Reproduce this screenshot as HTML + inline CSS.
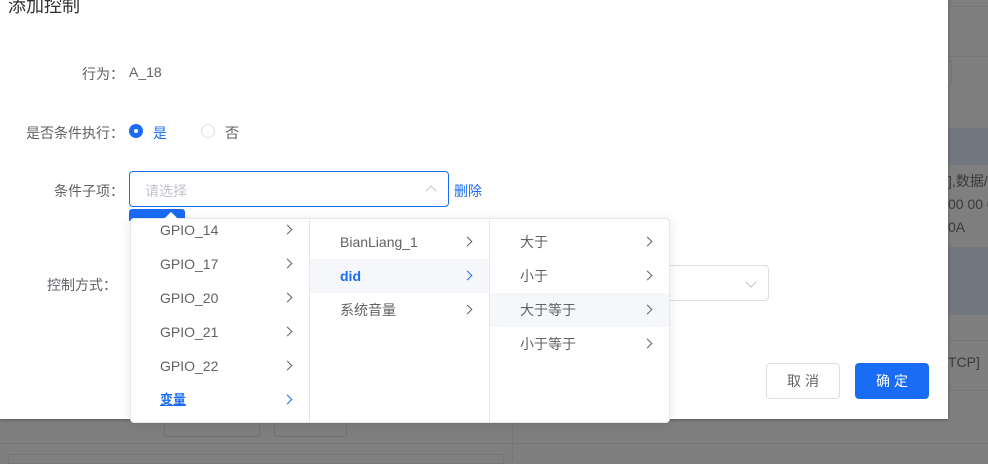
<!DOCTYPE html>
<html><head><meta charset="utf-8"><style>
*{box-sizing:border-box;margin:0;padding:0}
body{width:988px;height:461px;overflow:hidden;background:#7f7f7f;position:relative;font-family:"Liberation Sans","Noto Sans CJK SC",sans-serif;font-size:14px;color:#606266}
.abs{position:absolute}
.modal{left:0;top:-10px;width:948px;height:429px;background:#fff;box-shadow:0 1px 3px rgba(0,0,0,.3)}
.lbl{position:absolute;text-align:right;color:#606266;font-size:14px}
.chev{position:absolute;width:7px;height:7px;border-right:1px solid #606266;border-top:1px solid #606266;transform:rotate(45deg)}
.item{position:absolute;left:0;width:179px;height:34px;line-height:34px;padding-left:30px;font-size:14px;color:#606266}
.item .chev{right:18px;top:13px}
.blue{color:#1a6cf5}
.blue .chev{border-color:#1a6cf5}
.hl{background:#f5f7fa}
</style></head><body>
<div class="abs" style="left:948px;top:6px;width:40px;height:1px;background:#767676"></div>
<div class="abs" style="left:940px;top:24px;color:#555;font-size:12px">z</div>
<div class="abs" style="left:948px;top:56px;width:40px;height:1px;background:#767676"></div>
<div class="abs" style="left:940px;top:60px;width:12px;height:25px;border:1px solid #727272;border-radius:3px"></div>
<div class="abs" style="left:948px;top:128px;width:40px;height:37px;background:#737780"></div>
<div class="abs" style="left:948px;top:171px;color:#3a3a3a;font-size:14px;white-space:nowrap">],数据/</div>
<div class="abs" style="left:948px;top:196px;color:#3a3a3a;font-size:14px;white-space:nowrap">00 00 0</div>
<div class="abs" style="left:948px;top:219px;color:#3a3a3a;font-size:14px">0A</div>
<div class="abs" style="left:948px;top:247px;width:40px;height:68px;background:#737780"></div>
<div class="abs" style="left:948px;top:340px;width:40px;height:1px;background:#767676"></div>
<div class="abs" style="left:948px;top:354px;color:#3a3a3a;font-size:14px">TCP]</div>
<div class="abs" style="left:948px;top:390px;width:40px;height:1px;background:#767676"></div>
<div class="abs" style="left:0;top:443px;width:988px;height:1px;background:#767676"></div>
<div class="abs" style="left:8px;top:454px;width:496px;height:10px;border:1px solid #767676"></div>
<div class="abs" style="left:164px;top:423px;width:96px;height:14px;border:1px solid #727272;border-top:none;border-radius:0 0 3px 3px"></div>
<div class="abs" style="left:274px;top:423px;width:73px;height:14px;border:1px solid #727272;border-top:none;border-radius:0 0 3px 3px"></div>
<div class="abs" style="left:512px;top:423px;width:1px;height:38px;background:#767676"></div>

<div class="abs modal"></div>
<div class="abs" style="left:8px;top:-8px;font-size:18px;color:#303133">添加控制</div>
<div class="abs" style="left:915px;top:-6px;width:10px;height:10px;border-left:1px solid #909399;border-top:1px solid #909399;transform:rotate(45deg)"></div>

<div class="lbl" style="left:0;width:124px;top:64px">行为：</div>
<div class="abs" style="left:129px;top:64px;color:#606266">A_18</div>

<div class="lbl" style="left:0;width:124px;top:123px">是否条件执行：</div>
<div class="abs" style="left:129px;top:124px;width:14px;height:14px;border-radius:50%;background:#1a6cf5"><div class="abs" style="left:5px;top:5px;width:4px;height:4px;border-radius:50%;background:#fff"></div></div>
<div class="abs blue" style="left:153px;top:123px">是</div>
<div class="abs" style="left:201px;top:124px;width:14px;height:14px;border-radius:50%;border:1px solid #dcdfe6"></div>
<div class="abs" style="left:225px;top:123px">否</div>

<div class="lbl" style="left:0;width:124px;top:181px">条件子项：</div>
<div class="abs" style="left:129px;top:171px;width:320px;height:36px;border:1px solid #1a6cf5;border-radius:4px"></div>
<div class="abs" style="left:145px;top:181px;color:#c0c4cc">请选择</div>
<div class="abs" style="left:427px;top:187px;width:8px;height:8px;border-left:1px solid #c0c4cc;border-top:1px solid #c0c4cc;transform:rotate(45deg)"></div>
<div class="abs blue" style="left:454px;top:181px">删除</div>

<div class="lbl" style="left:0;width:117px;top:275px">控制方式：</div>
<div class="abs" style="left:640px;top:265px;width:129px;height:36px;border:1px solid #dcdfe6;border-radius:4px"></div>
<div class="abs" style="left:747px;top:278px;width:8px;height:8px;border-right:1px solid #c0c4cc;border-bottom:1px solid #c0c4cc;transform:rotate(45deg)"></div>

<div class="abs" style="left:766px;top:363px;width:74px;height:36px;border:1px solid #dcdfe6;border-radius:4px;text-align:center;line-height:34px;color:#606266;letter-spacing:4px;padding-left:4px">取消</div>
<div class="abs" style="left:855px;top:363px;width:74px;height:36px;background:#1a6cf5;border-radius:4px;text-align:center;line-height:36px;color:#fff;letter-spacing:4px;padding-left:4px">确定</div>

<div class="abs" style="left:129px;top:209px;width:56px;height:12px;background:#1a6cf5;border-radius:3px 3px 0 0"></div>
<div class="abs" style="left:130px;top:218px;width:540px;height:205px;background:#fff;border:1px solid #e4e7ed;border-radius:4px;box-shadow:0 2px 12px rgba(0,0,0,.1)"></div>
<div class="abs" style="left:166px;top:214px;width:10px;height:10px;background:#fff;transform:rotate(45deg)"></div>
<div class="abs" style="left:309px;top:219px;width:1px;height:203px;background:#e4e7ed"></div>
<div class="abs" style="left:489px;top:219px;width:1px;height:203px;background:#e4e7ed"></div>

<div class="abs" style="left:130px;top:219px;width:179px;height:203px;overflow:hidden">
<div class="item" style="top:-6px">GPIO_14<span class="chev"></span></div>
<div class="item" style="top:28px">GPIO_17<span class="chev"></span></div>
<div class="item" style="top:62px">GPIO_20<span class="chev"></span></div>
<div class="item" style="top:96px">GPIO_21<span class="chev"></span></div>
<div class="item" style="top:130px">GPIO_22<span class="chev"></span></div>
<div class="item blue" style="top:164px;font-weight:bold;font-size:13px"><span style="text-decoration:underline">变量</span><span class="chev"></span></div>
</div>
<div class="abs" style="left:310px;top:219px;width:179px;height:203px">
<div class="item" style="top:6px">BianLiang_1<span class="chev"></span></div>
<div class="item blue hl" style="top:40px;font-weight:bold">did<span class="chev"></span></div>
<div class="item" style="top:74px">系统音量<span class="chev"></span></div>
</div>
<div class="abs" style="left:490px;top:219px;width:179px;height:203px">
<div class="item" style="top:6px">大于<span class="chev"></span></div>
<div class="item" style="top:40px">小于<span class="chev"></span></div>
<div class="item hl" style="top:74px">大于等于<span class="chev"></span></div>
<div class="item" style="top:108px">小于等于<span class="chev"></span></div>
</div>
</body></html>
